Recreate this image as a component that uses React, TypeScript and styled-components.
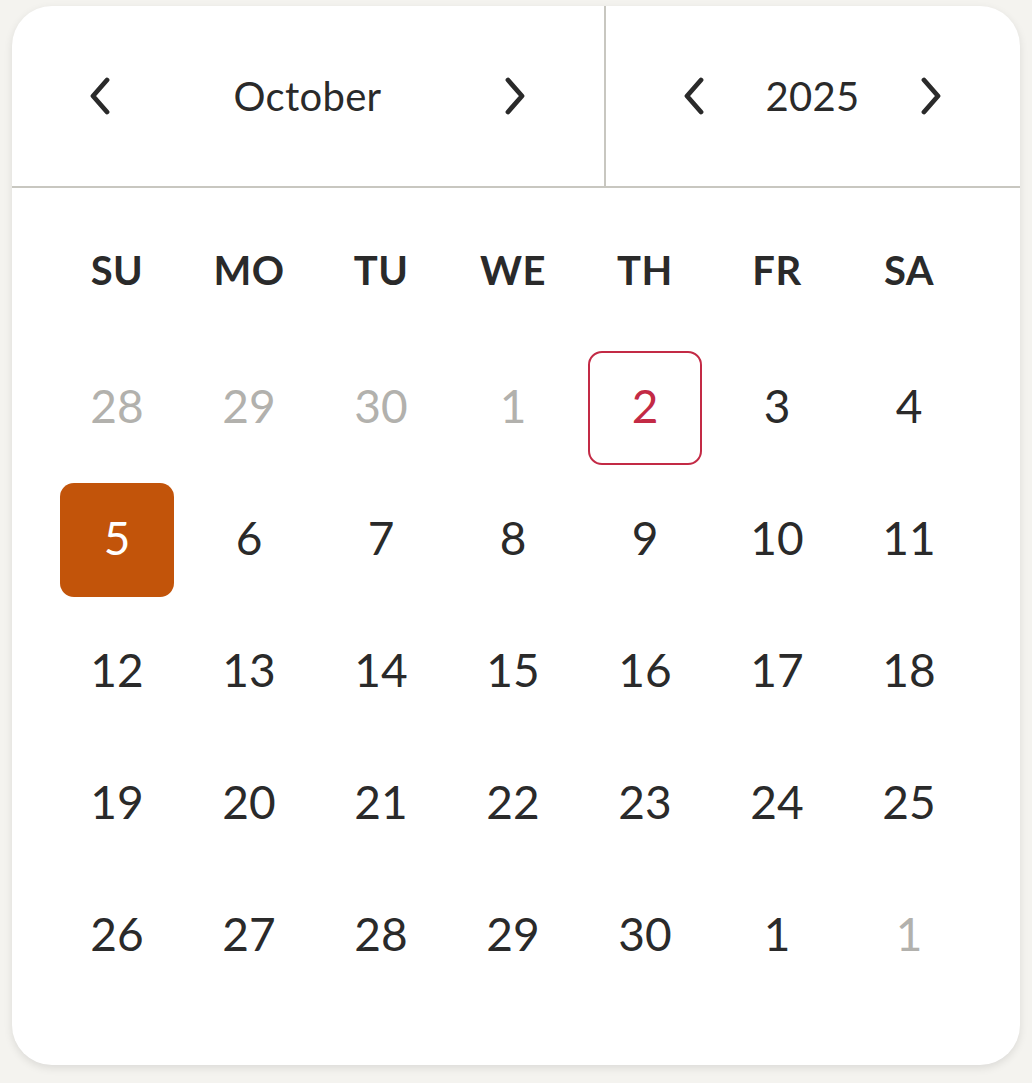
import { FC } from "react";
import styled, { createGlobalStyle, css } from "styled-components";

const colors = {
  page: "#f4f3ef",
  card: "#ffffff",
  text: "#2a2a2a",
  muted: "#b2b1ad",
  line: "#c8c7c0",
  accent: "#c2540a",
  today: "#c32a45",
};

const GlobalStyle = createGlobalStyle`
  html, body {
    margin: 0;
    padding: 0;
    background: ${colors.page};
    font-family: "Lato", "Noto Sans", sans-serif;
    color: ${colors.text};
  }
`;

const Page = styled.div`
  padding: 6px 12px 18px 12px;
`;

const Card = styled.div`
  background: ${colors.card};
  border-radius: 40px;
  box-shadow: 0 3px 8px rgba(0, 0, 0, 0.1);
  overflow: hidden;
`;

const Header = styled.div`
  display: grid;
  grid-template-columns: 592px 1fr;
  height: 180px;
  border-bottom: 2px solid ${colors.line};
`;

const Section = styled.div<{ $divider?: boolean }>`
  display: flex;
  align-items: center;
  justify-content: space-between;
  padding: 0 77px 0 76px;
  ${(p) =>
    p.$divider &&
    css`
      border-left: 2px solid ${colors.line};
    `}
`;

const NavButton = styled.button`
  display: flex;
  align-items: center;
  justify-content: center;
  width: 24px;
  height: 40px;
  padding: 0;
  border: none;
  background: none;
  color: ${colors.text};
  cursor: pointer;
`;

const Label = styled.span`
  font-size: 40px;
  font-weight: 400;
  letter-spacing: 0.3px;
`;

const Body = styled.div`
  padding: 25px 54px 72px 48px;
`;

const Grid = styled.div`
  display: grid;
  grid-template-columns: repeat(7, 114px);
  column-gap: 18px;
  row-gap: 18px;
`;

const Weekdays = styled(Grid)`
  margin-bottom: 24px;
`;

const Weekday = styled.div`
  height: 114px;
  display: flex;
  align-items: center;
  justify-content: center;
  font-size: 40px;
  font-weight: 700;
  letter-spacing: 0.5px;
`;

type DayKind = "muted" | "normal" | "today" | "selected";

const Day = styled.div<{ $kind: DayKind }>`
  height: 114px;
  box-sizing: border-box;
  display: flex;
  align-items: center;
  justify-content: center;
  padding-bottom: 6px;
  border-radius: 14px;
  font-size: 46px;
  font-weight: 400;
  color: ${colors.text};
  ${(p) =>
    p.$kind === "muted" &&
    css`
      color: ${colors.muted};
    `}
  ${(p) =>
    p.$kind === "today" &&
    css`
      color: ${colors.today};
      border: 2px solid ${colors.today};
    `}
  ${(p) =>
    p.$kind === "selected" &&
    css`
      color: #fff;
      background: ${colors.accent};
    `}
`;

const Chevron: FC<{ dir: "left" | "right" }> = ({ dir }) => (
  <svg width="22" height="38" viewBox="0 0 22 38" fill="none">
    <path
      d={dir === "left" ? "M18 3 L4 19 L18 35" : "M4 3 L18 19 L4 35"}
      stroke="currentColor"
      strokeWidth="4.8"
      strokeLinecap="round"
      strokeLinejoin="round"
    />
  </svg>
);

const weekdays = ["SU", "MO", "TU", "WE", "TH", "FR", "SA"];

const days: { n: number; kind: DayKind }[] = [
  { n: 28, kind: "muted" },
  { n: 29, kind: "muted" },
  { n: 30, kind: "muted" },
  { n: 1, kind: "muted" },
  { n: 2, kind: "today" },
  { n: 3, kind: "normal" },
  { n: 4, kind: "normal" },
  { n: 5, kind: "selected" },
  ...[6, 7, 8, 9, 10, 11, 12, 13, 14, 15, 16, 17, 18, 19, 20, 21, 22, 23, 24, 25, 26, 27, 28, 29, 30, 1].map(
    (n) => ({ n, kind: "normal" as DayKind })
  ),
  { n: 1, kind: "muted" },
];

const App: FC = () => {
  return (
    <>
      <GlobalStyle />
      <Page>
        <Card>
          <Header>
            <Section>
              <NavButton aria-label="Previous month">
                <Chevron dir="left" />
              </NavButton>
              <Label>October</Label>
              <NavButton aria-label="Next month">
                <Chevron dir="right" />
              </NavButton>
            </Section>
            <Section $divider>
              <NavButton aria-label="Previous year">
                <Chevron dir="left" />
              </NavButton>
              <Label>2025</Label>
              <NavButton aria-label="Next year">
                <Chevron dir="right" />
              </NavButton>
            </Section>
          </Header>
          <Body>
            <Weekdays>
              {weekdays.map((d) => (
                <Weekday key={d}>{d}</Weekday>
              ))}
            </Weekdays>
            <Grid>
              {days.map((d, i) => (
                <Day key={i} $kind={d.kind}>
                  {d.n}
                </Day>
              ))}
            </Grid>
          </Body>
        </Card>
      </Page>
    </>
  );
};

export default App;
